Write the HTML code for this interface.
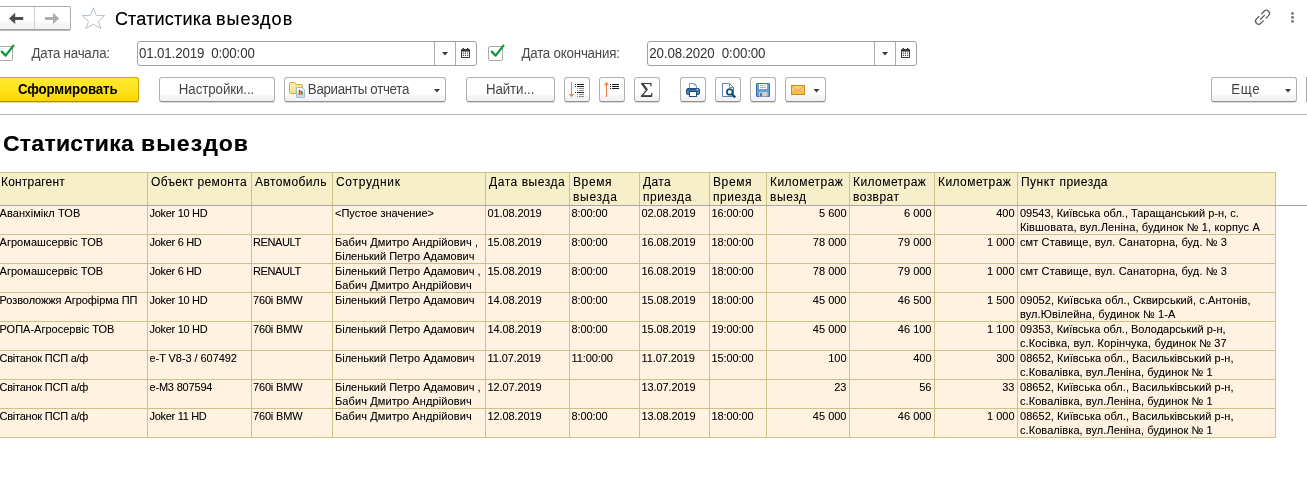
<!DOCTYPE html>
<html lang="ru">
<head>
<meta charset="utf-8">
<title>Статистика выездов</title>
<style>
html,body{margin:0;padding:0;background:#fff;}
body{width:1307px;height:497px;overflow:hidden;position:relative;font-family:"Liberation Sans",sans-serif;color:#000;}
.abs{position:absolute;}
svg{position:absolute;overflow:visible;}
/* nav */
.nav{position:absolute;left:-3px;top:6px;width:72px;height:22px;border:1px solid #adadad;border-bottom-color:#a2a2a2;border-radius:2px;background:linear-gradient(#fff 0%,#fff 60%,#f6f5f6 80%,#f4f3f4 100%);box-shadow:0 1px 0 #b9b9b9;}
.nav i{position:absolute;left:36px;top:0;width:1px;height:22px;background:#d0d0d0;}
.ptitle{position:absolute;top:8.5px;font-size:18px;line-height:21px;white-space:nowrap;color:#000;}
.lbl{transform:scaleY(1.09);transform-origin:0 0;position:absolute;top:45.1px;font-size:13.33px;line-height:15px;color:#4a4a4a;white-space:nowrap;letter-spacing:-.2px;}
.cb{position:absolute;top:46px;width:13px;height:13px;border:1px solid #a9a9a9;border-radius:2px;background:#fff;}
.inp{position:absolute;top:41px;height:23px;border:1px solid #a0a0a0;border-radius:3px;background:#fff;}
.inp span{transform:scaleY(1.09);transform-origin:0 0;position:absolute;left:1.5px;top:3.3px;font-size:13.33px;line-height:15px;white-space:pre;color:#333;letter-spacing:.04px;}
.inp i{position:absolute;top:0;width:1px;height:23px;background:#ababab;}
.btn{position:absolute;top:77px;height:23px;border:1px solid #b0b0b0;border-bottom-color:#8f8f8f;border-radius:3px;background:linear-gradient(#fff 0%,#fff 70%,#f5f3f5 80%,#f3f1f3 100%);box-shadow:0 1px 0 #dcdcdc;font-size:13.33px;line-height:15px;color:#444;white-space:nowrap;}
.btn span{transform:scaleY(1.09);transform-origin:0 0;position:absolute;top:2.7px;}
.btn.y{background:linear-gradient(#ffe930 0%,#ffe31c 50%,#fbd600 100%);border-color:#c9a900;border-bottom-color:#a88d00;box-shadow:0 1px 0 #e6dca0;color:#000;font-weight:bold;}
.sep{position:absolute;left:0;top:114px;width:1307px;height:1px;background:#b4b4b4;}
.rtitle{position:absolute;top:131px;font-size:22px;line-height:25px;font-weight:bold;white-space:nowrap;}
/* table */
.tbg-h{position:absolute;left:0;top:173px;width:1275px;height:32px;background:#f7efc9;}
.tbg-d{position:absolute;left:0;top:206px;width:1275px;height:231px;background:#fff2e0;}
.hc,.dc{text-shadow:0 0 0 rgba(0,0,0,.25);}
.rtitle,.ptitle{text-shadow:0 0 0 rgba(0,0,0,.5);}
.hc{position:absolute;top:174px;height:31px;box-sizing:border-box;padding:1px 0 0 3px;font-size:12px;line-height:15px;white-space:nowrap;overflow:hidden;}
.hc.c0{padding-left:1px;}
.dc{position:absolute;height:28px;box-sizing:border-box;padding:0 0 0 2px;font-size:11px;line-height:14px;white-space:nowrap;overflow:hidden;}
.dc.c0{padding-left:0;margin-left:-.5px;letter-spacing:-.07px;}
.dc.c1{padding-left:1.5px;letter-spacing:-.3px;}
.dc.c2{padding-left:1px;letter-spacing:-.38px;}
.dc.c4,.dc.c5,.dc.c6,.dc.c7{padding-left:1.5px;letter-spacing:-.1px;}
.dc.num{text-align:right;padding:0 2.5px 0 0;}
.vl{position:absolute;top:172px;width:1px;height:266px;background:#cec286;}
.hl{position:absolute;left:0;width:1276px;height:1px;background:#cec286;}
.fix{position:absolute;left:0;top:205px;width:1307px;height:1px;background:#a9a6ab;}
</style>
</head>
<body>
<div id="wrap" style="will-change:transform;position:absolute;left:0;top:0;width:1307px;height:497px;overflow:hidden">
<!-- top bar -->
<div class="nav"><i></i>
<svg style="left:11px;top:5px" width="15" height="13" viewBox="0 0 15 13"><path d="M0 6.4 L6.2 0.7 L6.2 4.9 L14.2 4.9 L14.2 7.9 L6.2 7.9 L6.2 12.1 Z" fill="#4c4c4c"/></svg>
<svg style="left:47px;top:5px" width="15" height="13" viewBox="0 0 15 13"><path d="M14.2 6.4 L8 0.7 L8 4.9 L0 4.9 L0 7.9 L8 7.9 L8 12.1 Z" fill="#adadad"/></svg>
</div>
<svg style="left:80px;top:6px" width="27" height="24" viewBox="80 6 27 24"><path d="M93.4 7.8 L96.3 15.4 L104.6 15.5 L98.3 21.4 L100.8 28.4 L93.4 24.3 L86 28.4 L88.5 21.4 L82.2 15.5 L90.5 15.4 Z" fill="#fff" stroke="#b4bfca" stroke-width="1" stroke-linejoin="miter" stroke-miterlimit="8"/></svg>
<div class="ptitle" style="left:114.9px;letter-spacing:.2px">Статистика</div>
<div class="ptitle" style="left:215.9px;letter-spacing:1.05px">выездов</div>
<svg style="left:1250px;top:5px" width="25" height="25" viewBox="-12.5 -12.5 25 25"><g transform="translate(0,-0.2) rotate(-45)" fill="none" stroke="#5c5c5c" stroke-width="1.25" stroke-linecap="round"><path d="M1.9 -3.1 H5.4 A3.1 3.1 0 0 1 5.4 3.1 H1.9"/><path d="M-1.9 -3.1 H-5.4 A3.1 3.1 0 0 0 -5.4 3.1 H-1.9"/><path d="M-2.7 0 H2.7"/></g></svg>
<svg style="left:1290px;top:11px" width="5" height="13" viewBox="0 0 5 13"><circle cx="2.5" cy="2.5" r="1.45" fill="#777"/><circle cx="2.5" cy="6.5" r="1.45" fill="#777"/><circle cx="2.5" cy="10.4" r="1.45" fill="#777"/></svg>

<!-- filter row -->
<div class="cb" style="left:-2px"></div>
<svg style="left:0px;top:44px" width="15" height="14" viewBox="0 0 15 14"><path d="M1.8 7.6 L5.6 11.6 L13.4 1.6" fill="none" stroke="#0a9b3e" stroke-width="2.3" stroke-linecap="round" stroke-linejoin="round"/></svg>
<div class="lbl" style="left:31.41px;letter-spacing:-0.209px">Дата начала:</div>
<div class="inp" style="left:137px;width:338px"><span style="left:1.02px;letter-spacing:-0.155px">01.01.2019  0:00:00</span><i style="left:296px"></i><i style="left:317px"></i>
<svg style="left:303.5px;top:10px" width="6" height="4" viewBox="0 0 6 4"><path d="M0 0 H6 L3 3.4 Z" fill="#3c3c3c"/></svg>
<svg style="left:323px;top:6px" width="9" height="10" viewBox="0 0 9 10"><rect x="0" y="1" width="9" height="9" rx="1" fill="#3a3a3a"/><rect x="1" y="3.6" width="7" height="5.4" fill="#fff"/><rect x="1.6" y="0" width="1.4" height="2" fill="#3a3a3a"/><rect x="6" y="0" width="1.4" height="2" fill="#3a3a3a"/><g fill="#4a4a4a"><rect x="1.8" y="4.5" width="1.2" height="1.2"/><rect x="3.9" y="4.5" width="1.2" height="1.2"/><rect x="6" y="4.5" width="1.2" height="1.2"/><rect x="1.8" y="6.8" width="1.2" height="1.2"/><rect x="3.9" y="6.8" width="1.2" height="1.2"/><rect x="6" y="6.8" width="1.2" height="1.2"/></g></svg>
</div>
<div class="cb" style="left:488px"></div>
<svg style="left:490px;top:44px" width="15" height="14" viewBox="0 0 15 14"><path d="M1.8 7.6 L5.6 11.6 L13.4 1.6" fill="none" stroke="#0a9b3e" stroke-width="2.3" stroke-linecap="round" stroke-linejoin="round"/></svg>
<div class="lbl" style="left:521.41px;letter-spacing:-0.212px">Дата окончания:</div>
<div class="inp" style="left:647px;width:268px"><span style="left:1.29px;letter-spacing:-0.134px">20.08.2020  0:00:00</span><i style="left:226px"></i><i style="left:247px"></i>
<svg style="left:233.5px;top:10px" width="6" height="4" viewBox="0 0 6 4"><path d="M0 0 H6 L3 3.4 Z" fill="#3c3c3c"/></svg>
<svg style="left:253px;top:6px" width="9" height="10" viewBox="0 0 9 10"><rect x="0" y="1" width="9" height="9" rx="1" fill="#3a3a3a"/><rect x="1" y="3.6" width="7" height="5.4" fill="#fff"/><rect x="1.6" y="0" width="1.4" height="2" fill="#3a3a3a"/><rect x="6" y="0" width="1.4" height="2" fill="#3a3a3a"/><g fill="#4a4a4a"><rect x="1.8" y="4.5" width="1.2" height="1.2"/><rect x="3.9" y="4.5" width="1.2" height="1.2"/><rect x="6" y="4.5" width="1.2" height="1.2"/><rect x="1.8" y="6.8" width="1.2" height="1.2"/><rect x="3.9" y="6.8" width="1.2" height="1.2"/><rect x="6" y="6.8" width="1.2" height="1.2"/></g></svg>
</div>

<!-- command bar -->
<div class="btn y" style="left:-3px;width:140px"><span style="left:19.91px;letter-spacing:-0.16px">Сформировать</span></div>
<div class="btn" style="left:159px;width:114px"><span style="left:18.82px;letter-spacing:-0.093px">Настройки...</span></div>
<div class="btn" style="left:284px;width:160px"><span style="left:22.82px;letter-spacing:-0.309px">Варианты отчета</span>
<svg style="left:148.5px;top:11px" width="6" height="4" viewBox="0 0 6 4"><path d="M0 0 H6 L3 3.4 Z" fill="#3c3c3c"/></svg>
<svg style="left:4px;top:4px" width="17" height="17" viewBox="289 82 17 17"><defs><linearGradient id="gf" x1="0" y1="0" x2="1" y2="1"><stop offset="0" stop-color="#fdf3bd"/><stop offset="1" stop-color="#f3d06a"/></linearGradient><linearGradient id="gd" x1="0" y1="0" x2="0" y2="1"><stop offset="0" stop-color="#ffffff"/><stop offset="1" stop-color="#c8dcef"/></linearGradient></defs><path d="M289.5 84 Q289.5 82.5 291 82.5 L294.5 82.5 Q295.5 82.5 296.3 84.5 L301.5 84.5 Q302.5 84.5 302.5 85.5 L302.5 93.5 L290.5 93.5 Q289.5 93.5 289.5 92.5 Z" fill="url(#gf)" stroke="#d6ab3f" stroke-width="1"/><path d="M296.5 87.5 H302 L304.5 90 V97.5 H296.5 Z" fill="url(#gd)" stroke="#a3bcd6" stroke-width="1"/><rect x="298.8" y="90" width="1.7" height="4.2" fill="#e0352b"/><rect x="301" y="91" width="1.8" height="3.2" fill="#3fa13f"/><rect x="297.6" y="94.3" width="5.8" height=".8" fill="#c77"/></svg></div>
<div class="btn" style="left:466px;width:87px"><span style="left:18.88px;letter-spacing:-0.096px">Найти...</span></div>
<div class="btn" style="left:564px;width:24px">
<svg style="left:-1px;top:-1px" width="26" height="24" viewBox="564 77 26 24" shape-rendering="crispEdges"><rect x="571" y="82" width="1" height="14" fill="#f08040"/><path d="M569 94 H574 L571.5 97.2 Z" fill="#f08040" shape-rendering="auto"/><g fill="#1e1e1e"><rect x="575" y="84" width="1" height="1"/><rect x="577" y="84" width="7" height="1"/><rect x="575" y="86" width="1" height="1"/><rect x="577" y="86" width="7" height="1"/><rect x="575" y="92" width="1" height="1"/><rect x="577" y="92" width="7" height="1"/></g><g fill="#8c8c8c"><rect x="577" y="88" width="1" height="1"/><rect x="579" y="88" width="5" height="1"/><rect x="577" y="90" width="1" height="1"/><rect x="579" y="90" width="5" height="1"/><rect x="577" y="94" width="1" height="1"/><rect x="579" y="94" width="5" height="1"/><rect x="577" y="96" width="1" height="1"/><rect x="579" y="96" width="5" height="1"/></g></svg></div>
<div class="btn" style="left:599px;width:24px">
<svg style="left:-1px;top:-1px" width="26" height="24" viewBox="599 77 26 24" shape-rendering="crispEdges"><rect x="606" y="83" width="1" height="14" fill="#f08040"/><path d="M604 85.2 H609 L606.5 81.8 Z" fill="#f08040" shape-rendering="auto"/><g fill="#1e1e1e"><rect x="610" y="84" width="1" height="1"/><rect x="612" y="84" width="7" height="1"/><rect x="610" y="86" width="1" height="1"/><rect x="612" y="86" width="7" height="1"/><rect x="610" y="88" width="1" height="1"/><rect x="612" y="88" width="7" height="1"/></g></svg></div>
<div class="btn" style="left:634px;width:24px"><span style="left:4.8px;top:-.4px;font-family:'Liberation Serif',serif;font-size:21px;line-height:24px;color:#3c3c3c;transform:scale(1.1,1);text-shadow:0 0 0 rgba(0,0,0,.5)">Σ</span></div>
<div class="btn" style="left:680px;width:24px">
<svg style="left:-1px;top:-1px" width="26" height="24" viewBox="680 77 26 24"><path d="M689.5 88.5 V83.5 H694.5 L696.5 85.5 V88.5" fill="#fff" stroke="#7d9cbd" stroke-width="1"/><path d="M694.5 83.5 V85.5 H696.5" fill="none" stroke="#7d9cbd" stroke-width=".8"/><rect x="686.5" y="88.5" width="13" height="6" rx="1.5" fill="#5a86b2" stroke="#1f4e80" stroke-width="1"/><rect x="687" y="89" width="12" height="1.6" fill="#2f5f92"/><rect x="689.5" y="91.5" width="7" height="5" fill="#fff" stroke="#1f4e80" stroke-width="1"/><rect x="696.5" y="89" width="1.6" height="1" fill="#dfeaf6"/></svg></div>
<div class="btn" style="left:715px;width:24px">
<svg style="left:-1px;top:-1px" width="26" height="24" viewBox="715 77 26 24"><path d="M722.5 83.5 H729.5 L733.5 87.5 V96.5 H722.5 Z" fill="#fff" stroke="#5f82a8" stroke-width="1"/><path d="M729.5 83.5 V87.5 H733.5" fill="none" stroke="#5f82a8" stroke-width=".9"/><circle cx="729.7" cy="91.9" r="2.8" fill="#fff" stroke="#114c7d" stroke-width="1.7"/><path d="M731.8 94.2 L735.3 97.4" stroke="#114c7d" stroke-width="2.2"/></svg></div>
<div class="btn" style="left:750px;width:24px">
<svg style="left:-1px;top:-1px" width="26" height="24" viewBox="750 77 26 24"><rect x="756.5" y="83.5" width="13" height="13" rx=".6" fill="#6c9cdb" stroke="#3a68ad" stroke-width="1"/><rect x="759" y="84" width="8" height="5" fill="#fff"/><rect x="760" y="85.1" width="6" height=".9" fill="#8fb0dc"/><rect x="760" y="87" width="6" height=".9" fill="#8fb0dc"/><rect x="759" y="92" width="8.5" height="4.5" fill="#c9cfcb"/><rect x="760.2" y="93" width="1.6" height="3.2" fill="#3a5f95"/></svg></div>
<div class="btn" style="left:785px;width:39px">
<svg style="left:-1px;top:-1px" width="41" height="24" viewBox="785 77 41 24"><defs><linearGradient id="gm" x1="0" y1="0" x2="0" y2="1"><stop offset="0" stop-color="#fbd98c"/><stop offset="1" stop-color="#f1b545"/></linearGradient></defs><rect x="791.5" y="85.5" width="13" height="9" fill="url(#gm)" stroke="#cf8c1e" stroke-width="1"/><path d="M792 86 L798 91.2 L804 86" fill="none" stroke="#d9a040" stroke-width=".9"/><path d="M792 94 L796.3 89.8 M804 94 L799.7 89.8" fill="none" stroke="#e3b055" stroke-width=".8"/><path d="M813.5 89 H819.5 L816.5 92.4 Z" fill="#3c3c3c"/></svg></div>
<div class="btn" style="left:1211px;width:84px"><span style="left:19.28px;letter-spacing:0.6px">Еще</span>
<svg style="left:72.5px;top:11px" width="6" height="4" viewBox="0 0 6 4"><path d="M0 0 H6 L3 3.4 Z" fill="#3c3c3c"/></svg></div>
<div class="abs" style="left:1306px;top:77px;width:1px;height:25px;background:#a9a9a9"></div>

<div class="sep"></div>
<div class="rtitle" id="rt1" style="left:2.8px;letter-spacing:.2px;transform:scaleX(1.048);transform-origin:0 0">Статистика</div>
<div class="rtitle" id="rt2" style="left:140.6px;letter-spacing:.95px;transform:scaleX(1.048);transform-origin:0 0">выездов</div>

<!-- table -->
<div class="tbg-h"></div><div class="tbg-d"></div>
<div class="hl" style="top:172px"></div>
<div class="hc c0" style="left:0px;width:147px"><span style="letter-spacing:0.19px">Контрагент</span></div>
<div class="hc" style="left:148px;width:103px"><span style="letter-spacing:0.34px">Объект ремонта</span></div>
<div class="hc" style="left:252px;width:80px"><span style="letter-spacing:0.4px">Автомобиль</span></div>
<div class="hc" style="left:333px;width:152px"><span style="letter-spacing:0.7px">Сотрудник</span></div>
<div class="hc" style="left:486px;width:83px"><span style="letter-spacing:0.55px">Дата выезда</span></div>
<div class="hc" style="left:570px;width:69px"><span style="letter-spacing:0.6px">Время</span><br><span style="letter-spacing:0.73px">выезда</span></div>
<div class="hc" style="left:640px;width:69px"><span style="letter-spacing:0.37px">Дата</span><br><span style="letter-spacing:0.52px">приезда</span></div>
<div class="hc" style="left:710px;width:56px"><span style="letter-spacing:0.6px">Время</span><br><span style="letter-spacing:0.52px">приезда</span></div>
<div class="hc" style="left:767px;width:82px"><span style="letter-spacing:0.43px">Километраж</span><br><span style="letter-spacing:0.59px">выезд</span></div>
<div class="hc" style="left:850px;width:84px"><span style="letter-spacing:0.43px">Километраж</span><br><span style="letter-spacing:0.44px">возврат</span></div>
<div class="hc" style="left:935px;width:82px"><span style="letter-spacing:0.43px">Километраж</span></div>
<div class="hc" style="left:1018px;width:257px"><span style="letter-spacing:0.49px">Пункт приезда</span></div>
<div class="dc c0" style="left:0px;top:206px;width:147px"><span style="letter-spacing:0.08px">Аванхімікл ТОВ</span></div>
<div class="dc c1" style="left:148px;top:206px;width:103px">Joker 10 HD</div>
<div class="dc c2" style="left:252px;top:206px;width:80px"></div>
<div class="dc c3" style="left:333px;top:206px;width:152px">&lt;Пустое значение&gt;</div>
<div class="dc c4" style="left:486px;top:206px;width:83px">01.08.2019</div>
<div class="dc c5" style="left:570px;top:206px;width:69px">8:00:00</div>
<div class="dc c6" style="left:640px;top:206px;width:69px">02.08.2019</div>
<div class="dc c7" style="left:710px;top:206px;width:56px">16:00:00</div>
<div class="dc num c8" style="left:767px;top:206px;width:82px">5 600</div>
<div class="dc num c9" style="left:850px;top:206px;width:84px">6 000</div>
<div class="dc num c10" style="left:935px;top:206px;width:82px">400</div>
<div class="dc c11" style="left:1018px;top:206px;width:257px">09543, Київська обл., Таращанський р-н, с.<br><span style="letter-spacing:0.13px">Ківшовата, вул.Леніна, будинок № 1, корпус А</span></div>
<div class="dc c0" style="left:0px;top:235px;width:147px"><span style="letter-spacing:0.05px">Агромашсервіс ТОВ</span></div>
<div class="dc c1" style="left:148px;top:235px;width:103px">Joker 6 HD</div>
<div class="dc c2" style="left:252px;top:235px;width:80px">RENAULT</div>
<div class="dc c3" style="left:333px;top:235px;width:152px"><span style="letter-spacing:0.1px">Бабич Дмитро Андрійович ,</span><br>Біленький Петро Адамович</div>
<div class="dc c4" style="left:486px;top:235px;width:83px">15.08.2019</div>
<div class="dc c5" style="left:570px;top:235px;width:69px">8:00:00</div>
<div class="dc c6" style="left:640px;top:235px;width:69px">16.08.2019</div>
<div class="dc c7" style="left:710px;top:235px;width:56px">18:00:00</div>
<div class="dc num c8" style="left:767px;top:235px;width:82px">78 000</div>
<div class="dc num c9" style="left:850px;top:235px;width:84px">79 000</div>
<div class="dc num c10" style="left:935px;top:235px;width:82px">1 000</div>
<div class="dc c11" style="left:1018px;top:235px;width:257px"><span style="letter-spacing:0.11px">смт Ставище, вул. Санаторна, буд. № 3</span></div>
<div class="dc c0" style="left:0px;top:264px;width:147px"><span style="letter-spacing:0.05px">Агромашсервіс ТОВ</span></div>
<div class="dc c1" style="left:148px;top:264px;width:103px">Joker 6 HD</div>
<div class="dc c2" style="left:252px;top:264px;width:80px">RENAULT</div>
<div class="dc c3" style="left:333px;top:264px;width:152px">Біленький Петро Адамович ,<br><span style="letter-spacing:0.1px">Бабич Дмитро Андрійович</span></div>
<div class="dc c4" style="left:486px;top:264px;width:83px">15.08.2019</div>
<div class="dc c5" style="left:570px;top:264px;width:69px">8:00:00</div>
<div class="dc c6" style="left:640px;top:264px;width:69px">16.08.2019</div>
<div class="dc c7" style="left:710px;top:264px;width:56px">18:00:00</div>
<div class="dc num c8" style="left:767px;top:264px;width:82px">78 000</div>
<div class="dc num c9" style="left:850px;top:264px;width:84px">79 000</div>
<div class="dc num c10" style="left:935px;top:264px;width:82px">1 000</div>
<div class="dc c11" style="left:1018px;top:264px;width:257px"><span style="letter-spacing:0.11px">смт Ставище, вул. Санаторна, буд. № 3</span></div>
<div class="dc c0" style="left:0px;top:293px;width:147px">Розволожжя Агрофірма ПП</div>
<div class="dc c1" style="left:148px;top:293px;width:103px">Joker 10 HD</div>
<div class="dc c2" style="left:252px;top:293px;width:80px"><span style="letter-spacing:-0.16px">760i BMW</span></div>
<div class="dc c3" style="left:333px;top:293px;width:152px">Біленький Петро Адамович</div>
<div class="dc c4" style="left:486px;top:293px;width:83px">14.08.2019</div>
<div class="dc c5" style="left:570px;top:293px;width:69px">8:00:00</div>
<div class="dc c6" style="left:640px;top:293px;width:69px">15.08.2019</div>
<div class="dc c7" style="left:710px;top:293px;width:56px">18:00:00</div>
<div class="dc num c8" style="left:767px;top:293px;width:82px">45 000</div>
<div class="dc num c9" style="left:850px;top:293px;width:84px">46 500</div>
<div class="dc num c10" style="left:935px;top:293px;width:82px">1 500</div>
<div class="dc c11" style="left:1018px;top:293px;width:257px"><span style="letter-spacing:0.09px">09052, Київська обл., Сквирський, с.Антонів,</span><br><span style="letter-spacing:0.11px">вул.Ювілейна, будинок № 1-А</span></div>
<div class="dc c0" style="left:0px;top:322px;width:147px"><span style="letter-spacing:0px">РОПА-Агросервіс ТОВ</span></div>
<div class="dc c1" style="left:148px;top:322px;width:103px">Joker 10 HD</div>
<div class="dc c2" style="left:252px;top:322px;width:80px"><span style="letter-spacing:-0.16px">760i BMW</span></div>
<div class="dc c3" style="left:333px;top:322px;width:152px">Біленький Петро Адамович</div>
<div class="dc c4" style="left:486px;top:322px;width:83px">14.08.2019</div>
<div class="dc c5" style="left:570px;top:322px;width:69px">8:00:00</div>
<div class="dc c6" style="left:640px;top:322px;width:69px">15.08.2019</div>
<div class="dc c7" style="left:710px;top:322px;width:56px">19:00:00</div>
<div class="dc num c8" style="left:767px;top:322px;width:82px">45 000</div>
<div class="dc num c9" style="left:850px;top:322px;width:84px">46 100</div>
<div class="dc num c10" style="left:935px;top:322px;width:82px">1 100</div>
<div class="dc c11" style="left:1018px;top:322px;width:257px">09353, Київська обл., Володарський р-н,<br><span style="letter-spacing:0.12px">с.Косівка, вул. Корінчука, будинок № 37</span></div>
<div class="dc c0" style="left:0px;top:351px;width:147px"><span style="letter-spacing:-0.23px">Світанок ПСП а/ф</span></div>
<div class="dc c1" style="left:148px;top:351px;width:103px"><span style="letter-spacing:-0.065px">e-T V8-3 / 607492</span></div>
<div class="dc c2" style="left:252px;top:351px;width:80px"></div>
<div class="dc c3" style="left:333px;top:351px;width:152px">Біленький Петро Адамович</div>
<div class="dc c4" style="left:486px;top:351px;width:83px">11.07.2019</div>
<div class="dc c5" style="left:570px;top:351px;width:69px">11:00:00</div>
<div class="dc c6" style="left:640px;top:351px;width:69px">11.07.2019</div>
<div class="dc c7" style="left:710px;top:351px;width:56px">15:00:00</div>
<div class="dc num c8" style="left:767px;top:351px;width:82px">100</div>
<div class="dc num c9" style="left:850px;top:351px;width:84px">400</div>
<div class="dc num c10" style="left:935px;top:351px;width:82px">300</div>
<div class="dc c11" style="left:1018px;top:351px;width:257px"><span style="letter-spacing:0.05px">08652, Київська обл., Васильківський р-н,</span><br><span style="letter-spacing:0.07px">с.Ковалівка, вул.Леніна, будинок № 1</span></div>
<div class="dc c0" style="left:0px;top:380px;width:147px"><span style="letter-spacing:-0.23px">Світанок ПСП а/ф</span></div>
<div class="dc c1" style="left:148px;top:380px;width:103px"><span style="letter-spacing:-0.19px">e-M3 807594</span></div>
<div class="dc c2" style="left:252px;top:380px;width:80px"><span style="letter-spacing:-0.16px">760i BMW</span></div>
<div class="dc c3" style="left:333px;top:380px;width:152px">Біленький Петро Адамович ,<br><span style="letter-spacing:0.1px">Бабич Дмитро Андрійович</span></div>
<div class="dc c4" style="left:486px;top:380px;width:83px">12.07.2019</div>
<div class="dc c5" style="left:570px;top:380px;width:69px"></div>
<div class="dc c6" style="left:640px;top:380px;width:69px">13.07.2019</div>
<div class="dc c7" style="left:710px;top:380px;width:56px"></div>
<div class="dc num c8" style="left:767px;top:380px;width:82px">23</div>
<div class="dc num c9" style="left:850px;top:380px;width:84px">56</div>
<div class="dc num c10" style="left:935px;top:380px;width:82px">33</div>
<div class="dc c11" style="left:1018px;top:380px;width:257px"><span style="letter-spacing:0.05px">08652, Київська обл., Васильківський р-н,</span><br><span style="letter-spacing:0.07px">с.Ковалівка, вул.Леніна, будинок № 1</span></div>
<div class="dc c0" style="left:0px;top:409px;width:147px"><span style="letter-spacing:-0.23px">Світанок ПСП а/ф</span></div>
<div class="dc c1" style="left:148px;top:409px;width:103px">Joker 11 HD</div>
<div class="dc c2" style="left:252px;top:409px;width:80px"><span style="letter-spacing:-0.16px">760i BMW</span></div>
<div class="dc c3" style="left:333px;top:409px;width:152px"><span style="letter-spacing:0.1px">Бабич Дмитро Андрійович</span></div>
<div class="dc c4" style="left:486px;top:409px;width:83px">12.08.2019</div>
<div class="dc c5" style="left:570px;top:409px;width:69px">8:00:00</div>
<div class="dc c6" style="left:640px;top:409px;width:69px">13.08.2019</div>
<div class="dc c7" style="left:710px;top:409px;width:56px">18:00:00</div>
<div class="dc num c8" style="left:767px;top:409px;width:82px">45 000</div>
<div class="dc num c9" style="left:850px;top:409px;width:84px">46 000</div>
<div class="dc num c10" style="left:935px;top:409px;width:82px">1 000</div>
<div class="dc c11" style="left:1018px;top:409px;width:257px"><span style="letter-spacing:0.05px">08652, Київська обл., Васильківський р-н,</span><br><span style="letter-spacing:0.07px">с.Ковалівка, вул.Леніна, будинок № 1</span></div>
<div class="vl" style="left:147px"></div>
<div class="vl" style="left:251px"></div>
<div class="vl" style="left:332px"></div>
<div class="vl" style="left:485px"></div>
<div class="vl" style="left:569px"></div>
<div class="vl" style="left:639px"></div>
<div class="vl" style="left:709px"></div>
<div class="vl" style="left:766px"></div>
<div class="vl" style="left:849px"></div>
<div class="vl" style="left:934px"></div>
<div class="vl" style="left:1017px"></div>
<div class="vl" style="left:1275px"></div>
<div class="hl" style="top:172px"></div>
<div class="hl" style="top:234px"></div>
<div class="hl" style="top:263px"></div>
<div class="hl" style="top:292px"></div>
<div class="hl" style="top:321px"></div>
<div class="hl" style="top:350px"></div>
<div class="hl" style="top:379px"></div>
<div class="hl" style="top:408px"></div>
<div class="hl" style="top:437px"></div>
<div class="fix"></div>
</div>
</body>
</html>
